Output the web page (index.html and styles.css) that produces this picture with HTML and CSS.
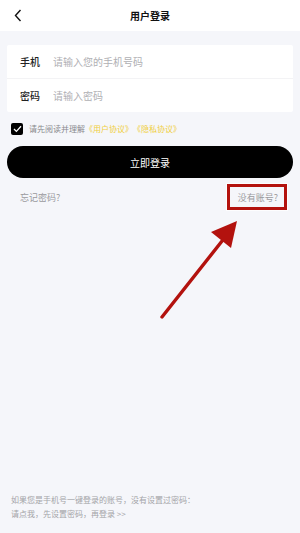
FILE: index.html
```html
<!DOCTYPE html>
<html lang="zh-CN">
<head>
<meta charset="utf-8">
<title>用户登录</title>
<link rel="stylesheet" href="styles.css">
</head>
<body>
<div class="page">
  <header class="topbar">
    <svg class="back" width="8" height="13" viewBox="0 0 8 13"><path d="M6.5 1 L1.5 6.5 L6.5 12" fill="none" stroke="#111" stroke-width="1.4"/></svg>
    <h1 class="title">用户登录</h1>
  </header>
  <main class="main">
    <section class="card">
      <label class="row">
        <span class="label">手机</span>
        <input class="field" type="text" placeholder="请输入您的手机号码">
      </label>
      <label class="row">
        <span class="label">密码</span>
        <input class="field" type="password" placeholder="请输入密码">
      </label>
    </section>
    <div class="agree">
      <span class="check"><svg width="9" height="8" viewBox="0 0 9 8"><path d="M1 4 L3.4 6.4 L8 1.2" fill="none" stroke="#fff" stroke-width="1.3"/></svg></span>
      <span class="agree-text">请先阅读并理解</span>
      <a class="proto">《用户协议》</a>
      <a class="proto">《隐私协议》</a>
    </div>
    <button class="submit">立即登录</button>
    <div class="links">
      <span class="link">忘记密码?</span>
      <span class="link boxed">没有账号?</span>
    </div>
  </main>
  <footer class="foot">
    <p>如果您是手机号一键登录的账号，没有设置过密码：</p>
    <p>请点我，先设置密码，再登录 &gt;&gt;</p>
  </footer>
  <svg class="arrow" width="300" height="533" viewBox="0 0 300 533">
    <line x1="162" y1="317" x2="226" y2="236" stroke="#b3120e" stroke-width="3.4" stroke-linecap="round"/>
    <polygon points="237,221 211,232 231,248" fill="#b3120e"/>
  </svg>
</div>
</body>
</html>
```
FILE: styles.css
```css
* { box-sizing: border-box; }
html, body { margin: 0; padding: 0; }
body {
  background: #f5f6fa;
  font-family: "Noto Sans CJK SC", "Noto Sans", sans-serif;
}
.page {
  position: relative;
  width: 300px;
  height: 533px;
  display: flex;
  flex-direction: column;
  overflow: hidden;
}
.topbar {
  height: 31px;
  background: #fff;
  display: flex;
  align-items: center;
  justify-content: center;
  position: relative;
}
.back {
  position: absolute;
  left: 14px;
  top: 9px;
}
.title {
  margin: 0;
  font-size: 10px;
  font-weight: 700;
  color: #111;
  line-height: 12px;
}
.main {
  padding: 14px 7px 0;
  display: flex;
  flex-direction: column;
}
.card {
  background: #fff;
  border-radius: 2px;
  display: flex;
  flex-direction: column;
}
.row {
  height: 34px;
  display: flex;
  align-items: center;
  padding-left: 13px;
  gap: 13px;
}
.row + .row { border-top: 1px solid #f3f3f5; height: 34px; }
.row:first-child { height: 33px; }
.label {
  font-size: 10px;
  color: #222;
  font-weight: 500;
  line-height: 12px;
}
.field {
  flex: 1;
  border: none;
  outline: none;
  background: transparent;
  font-family: inherit;
  font-size: 10px;
  padding: 0;
  color: #333;
}
.field::placeholder { color: #b0b0b4; }
.agree {
  margin-top: 10px;
  height: 14px;
  display: flex;
  align-items: center;
  padding-left: 4px;
  font-size: 8px;
  line-height: 10px;
}
.check {
  width: 12px;
  height: 12px;
  background: #000;
  border-radius: 2px;
  display: flex;
  align-items: center;
  justify-content: center;
  margin-right: 6px;
}
.agree-text { color: #8a8a8e; }
.proto { color: #f0cf3c; }
.submit {
  margin-top: 10px;
  height: 32px;
  border: none;
  border-radius: 16px;
  background: #000;
  color: #fff;
  font-family: inherit;
  font-size: 10px;
  padding: 0;
}
.links {
  margin-top: 6px;
  height: 26px;
  display: flex;
  align-items: center;
  justify-content: space-between;
  padding-left: 13px;
  padding-right: 6px;
}
.link {
  font-size: 9px;
  color: #9a9a9e;
  line-height: 11px;
}
.boxed {
  height: 26px;
  display: flex;
  align-items: center;
  padding: 0 6px 0 8px;
  border: 3px solid #b3120e;
  box-shadow: 0 0 0 1px rgba(255,255,255,0.8);
}
.foot {
  margin-top: auto;
  padding: 0 0 12px 11px;
}
.foot p {
  margin: 0;
  font-size: 8px;
  line-height: 14px;
  color: #a4a4a8;
}
.arrow {
  position: absolute;
  left: 0;
  top: 0;
  pointer-events: none;
}
```
